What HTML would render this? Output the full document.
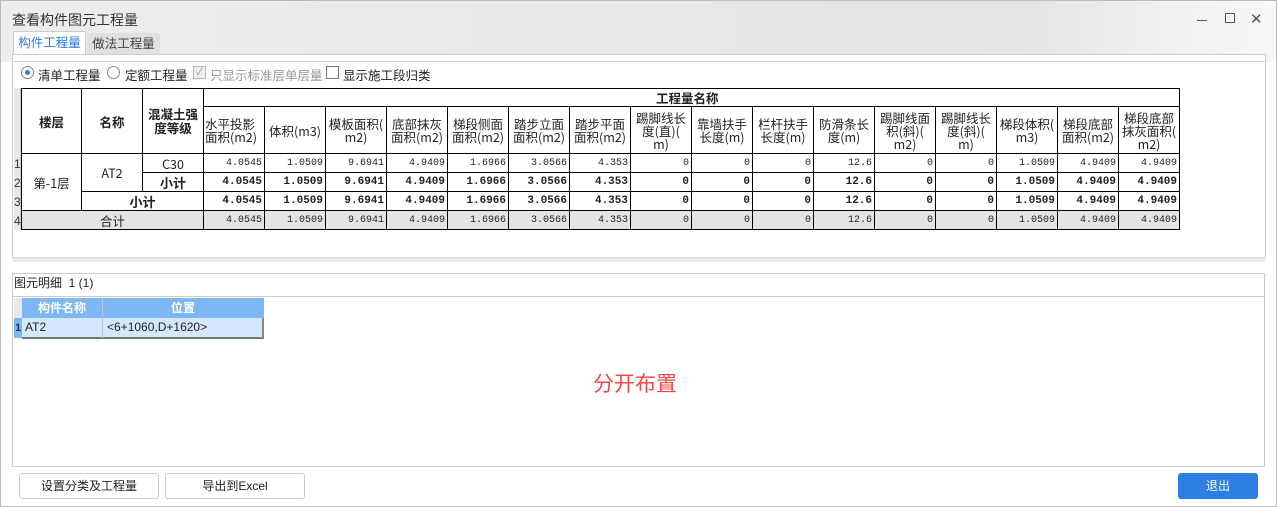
<!DOCTYPE html>
<html><head><meta charset="utf-8"><style>
*{margin:0;padding:0;box-sizing:border-box}
body{width:1277px;height:507px;overflow:hidden;position:relative;background:#fff;font-family:"Liberation Sans","Noto Sans CJK SC",sans-serif;font-size:12px;color:#222}
.a{position:absolute}
table{border-collapse:collapse;table-layout:fixed;position:absolute;left:21px;top:88px}
td{border:1px solid #000;font-family:"Liberation Mono","Noto Sans CJK SC",monospace;font-size:10px;text-align:right;padding:0 2px;height:19px;line-height:17px;white-space:nowrap;overflow:hidden}
td.h{text-align:center;font-family:"Noto Sans CJK SC",sans-serif;font-size:12.5px;line-height:13px;padding:0 1px}
td.hc{text-align:center;font-family:"Noto Sans CJK SC",sans-serif;font-size:12.5px;font-weight:bold}
tr.b td{font-weight:bold;font-size:11px}
tr.s td{background:#e4e4e4}
td.c{text-align:center;font-family:"Noto Sans CJK SC",sans-serif;font-size:12.5px}
.btn{position:absolute;top:473px;height:26px;border:1px solid #ccc;border-radius:3px;background:#fff;text-align:center;line-height:24px;font-size:12px}
</style></head><body>
<div class="a" style="left:0;top:0;width:1277px;height:62px;background:linear-gradient(90deg,#ededed,#e5e5e5 80%,#f8f8f8)"></div>
<div class="a" style="left:12px;top:10px;font-size:14px;color:#333">查看构件图元工程量</div>
<div class="a" style="left:1197px;top:20px;width:10px;height:1px;background:#555"></div>
<div class="a" style="left:1225px;top:13px;width:10px;height:10px;border:1px solid #555"></div>
<div class="a" style="left:1250px;top:10px;font-size:15px;color:#555">✕</div>
<div class="a" style="left:13px;top:31px;width:73px;height:24px;background:#fff;border:1px solid #ccc;border-bottom:none;color:#2a7ae2;font-size:12.5px;line-height:22px;text-align:center">构件工程量</div>
<div class="a" style="left:87px;top:33px;width:73px;height:22px;background:#e0e0e0;color:#444;font-size:12.5px;line-height:22px;text-align:center">做法工程量</div>
<div class="a" style="left:12px;top:54px;width:1254px;height:205px;border:1px solid #ccc;border-bottom:none;background:#fff"></div>
<div class="a" style="left:12px;top:61px;width:1254px;height:1px;background:#d0d0d0"></div>
<div class="a" style="left:21px;top:66px;width:13px;height:13px;border:1px solid #888;border-radius:50%;background:#fff"></div>
<div class="a" style="left:25px;top:70px;width:5px;height:5px;border-radius:50%;background:#2a7ae2"></div>
<div class="a" style="left:38px;top:65px;font-size:12.5px">清单工程量</div>
<div class="a" style="left:107px;top:66px;width:13px;height:13px;border:1px solid #888;border-radius:50%"></div>
<div class="a" style="left:125px;top:65px;font-size:12.5px">定额工程量</div>
<div class="a" style="left:193px;top:66px;width:13px;height:13px;border:1px solid #bbb;background:#eee;color:#999;font-size:10px;line-height:11px;text-align:center">✓</div>
<div class="a" style="left:210px;top:65px;font-size:12.5px;color:#999">只显示标准层单层量</div>
<div class="a" style="left:326px;top:66px;width:13px;height:13px;border:1px solid #777"></div>
<div class="a" style="left:343px;top:65px;font-size:12.5px">显示施工段归类</div>
<div class="a" style="left:14px;top:88px;width:7px;height:142px;background:#e8e8e8;border-right:1px solid #ccc"></div>
<div class="a" style="left:14px;top:155px;font-size:12px;line-height:19px;color:#333">1<br>2<br>3<br>4</div>
<table>
<colgroup><col style="width:60px"><col style="width:61px"><col style="width:61px"><col span="16" style="width:61px"></colgroup>
<tr style="height:18px"><td class="hc" rowspan="2" style="height:65px">楼层</td><td class="hc" rowspan="2">名称</td><td class="hc" rowspan="2" style="line-height:14px">混凝土强<br>度等级</td><td class="hc" colspan="16" style="text-align:left;padding-left:452px;height:18px">工程量名称</td></tr>
<tr style="height:47px"><td class="h" style="text-align:left">水平投影<br>面积(m2)</td><td class="h">体积(m3)</td><td class="h">模板面积(<br>m2)</td><td class="h">底部抹灰<br>面积(m2)</td><td class="h">梯段侧面<br>面积(m2)</td><td class="h">踏步立面<br>面积(m2)</td><td class="h">踏步平面<br>面积(m2)</td><td class="h">踢脚线长<br>度(直)(<br>m)</td><td class="h">靠墙扶手<br>长度(m)</td><td class="h">栏杆扶手<br>长度(m)</td><td class="h">防滑条长<br>度(m)</td><td class="h">踢脚线面<br>积(斜)(<br>m2)</td><td class="h">踢脚线长<br>度(斜)(<br>m)</td><td class="h">梯段体积(<br>m3)</td><td class="h">梯段底部<br>面积(m2)</td><td class="h">梯段底部<br>抹灰面积(<br>m2)</td></tr>
<tr><td class="c" rowspan="3">第-1层</td><td class="c" rowspan="2">AT2</td><td class="c">C30</td><td>4.0545</td><td>1.0509</td><td>9.6941</td><td>4.9409</td><td>1.6966</td><td>3.0566</td><td>4.353</td><td>0</td><td>0</td><td>0</td><td>12.6</td><td>0</td><td>0</td><td>1.0509</td><td>4.9409</td><td>4.9409</td></tr>
<tr class="b"><td class="hc" style="font-size:13px">小计</td><td>4.0545</td><td>1.0509</td><td>9.6941</td><td>4.9409</td><td>1.6966</td><td>3.0566</td><td>4.353</td><td>0</td><td>0</td><td>0</td><td>12.6</td><td>0</td><td>0</td><td>1.0509</td><td>4.9409</td><td>4.9409</td></tr>
<tr class="b"><td class="hc" colspan="2" style="font-size:13px">小计</td><td>4.0545</td><td>1.0509</td><td>9.6941</td><td>4.9409</td><td>1.6966</td><td>3.0566</td><td>4.353</td><td>0</td><td>0</td><td>0</td><td>12.6</td><td>0</td><td>0</td><td>1.0509</td><td>4.9409</td><td>4.9409</td></tr>
<tr class="s"><td class="c" colspan="3">合计</td><td>4.0545</td><td>1.0509</td><td>9.6941</td><td>4.9409</td><td>1.6966</td><td>3.0566</td><td>4.353</td><td>0</td><td>0</td><td>0</td><td>12.6</td><td>0</td><td>0</td><td>1.0509</td><td>4.9409</td><td>4.9409</td></tr>
</table>
<div class="a" style="left:12px;top:257px;width:1254px;height:5px;background:#ececec;border-top:1px solid #ddd"></div>
<div class="a" style="left:12px;top:273px;width:1253px;height:194px;border:1px solid #ccc;background:#fff"></div>
<div class="a" style="left:14px;top:274px;font-size:12px">图元明细&nbsp; 1 (1)</div>
<div class="a" style="left:13px;top:296px;width:1251px;height:1px;background:#ccc"></div>
<div class="a" style="left:14px;top:298px;width:8px;height:40px;background:#e8e8e8"></div>
<div class="a" style="left:14px;top:318px;width:8px;height:20px;background:#7db8f5;color:#234;font-size:11px;text-align:center;line-height:20px;font-weight:bold">1</div>
<div class="a" style="left:22px;top:298px;width:242px;height:20px;background:#7db8f5"></div>
<div class="a" style="left:102px;top:298px;width:1px;height:40px;background:#b0c8e0"></div>
<div class="a" style="left:22px;top:299px;width:80px;text-align:center;color:#fff;font-weight:bold;font-size:12px">构件名称</div>
<div class="a" style="left:103px;top:299px;width:160px;text-align:center;color:#fff;font-weight:bold;font-size:12px">位置</div>
<div class="a" style="left:22px;top:318px;width:242px;height:21px;background:#d5e8fb;border-bottom:2px solid #777;border-right:2px solid #888"></div>
<div class="a" style="left:102px;top:318px;width:1px;height:20px;background:#b0c8e0"></div>
<div class="a" style="left:25px;top:320px;font-size:12px">AT2</div>
<div class="a" style="left:107px;top:320px;font-size:12px">&lt;6+1060,D+1620&gt;</div>
<div class="a" style="left:593px;top:368px;font-size:21px;color:#f04848">分开布置</div>
<div class="btn" style="left:19px;width:140px">设置分类及工程量</div>
<div class="btn" style="left:165px;width:140px">导出到Excel</div>
<div class="btn" style="left:1178px;width:80px;background:#2b7fe0;border-color:#2b7fe0;color:#fff">退出</div>
<div class="a" style="left:0;top:0;width:1277px;height:507px;border:1px solid #bbb;pointer-events:none"></div>
</body></html>
